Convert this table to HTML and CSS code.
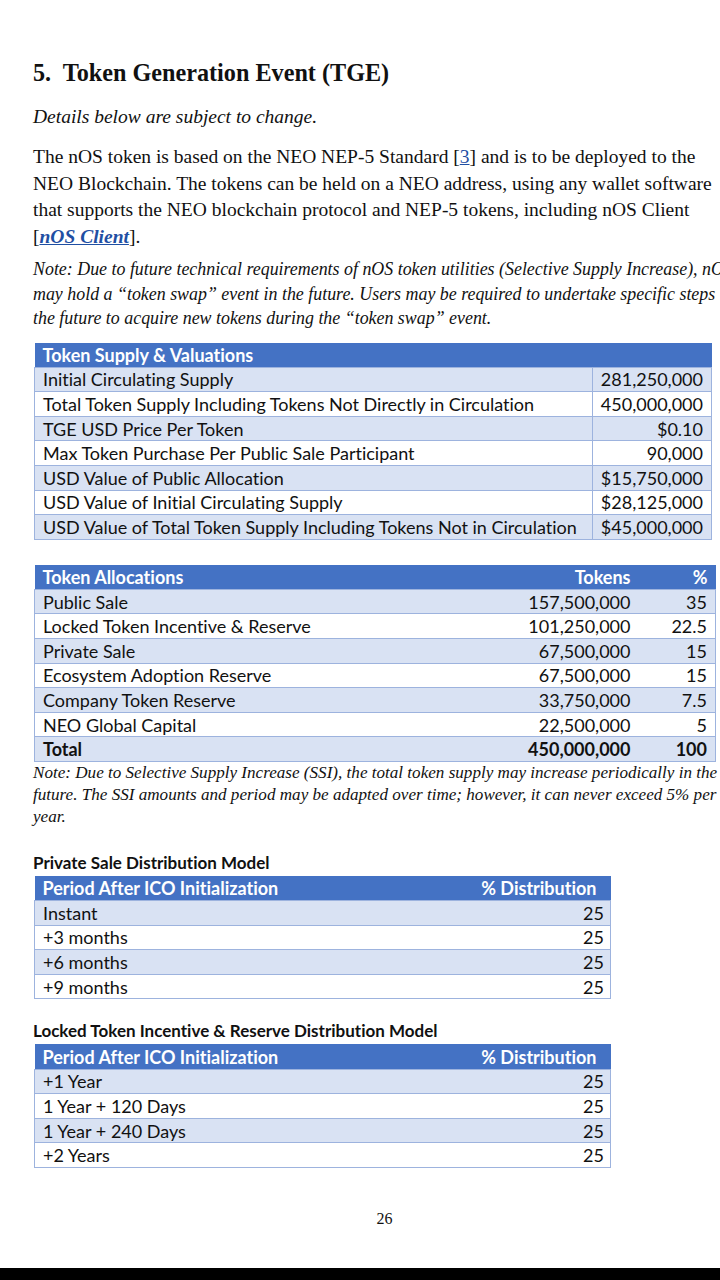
FILE: index.html
```html
<!DOCTYPE html>
<html lang="en">
<head>
<meta charset="utf-8">
<title>Token Generation Event (TGE)</title>
<link rel="stylesheet" href="styles.css">
</head>
<body>
<div class="screen">
  <main class="page">
    <h1 class="title">5.&nbsp; Token Generation Event (TGE)</h1>
    <p class="subtitle">Details below are subject to change.</p>
    <p class="para">
      <span class="line">The nOS token is based on the NEO NEP-5 Standard [<a class="ref" href="#">3</a>] and is to be deployed to the</span>
      <span class="line">NEO Blockchain. The tokens can be held on a NEO address, using any wallet software</span>
      <span class="line">that supports the NEO blockchain protocol and NEP-5 tokens, including nOS Client</span>
      <span class="line">[<a class="ref strong" href="#">nOS Client</a>].</span>
    </p>
    <p class="note">
      <span class="line">Note: Due to future technical requirements of nOS token utilities (Selective Supply Increase), nOS</span>
      <span class="line">may hold a “token swap” event in the future. Users may be required to undertake specific steps in</span>
      <span class="line">the future to acquire new tokens during the “token swap” event.</span>
    </p>

    <table class="tbl tbl-supply">
      <thead>
        <tr><th colspan="2">Token Supply &amp; Valuations</th></tr>
      </thead>
      <tbody>
        <tr><td>Initial Circulating Supply</td><td class="num">281,250,000</td></tr>
        <tr><td>Total Token Supply Including Tokens Not Directly in Circulation</td><td class="num">450,000,000</td></tr>
        <tr><td>TGE USD Price Per Token</td><td class="num">$0.10</td></tr>
        <tr><td>Max Token Purchase Per Public Sale Participant</td><td class="num">90,000</td></tr>
        <tr><td>USD Value of Public Allocation</td><td class="num">$15,750,000</td></tr>
        <tr><td>USD Value of Initial Circulating Supply</td><td class="num">$28,125,000</td></tr>
        <tr><td>USD Value of Total Token Supply Including Tokens Not in Circulation</td><td class="num">$45,000,000</td></tr>
      </tbody>
    </table>

    <table class="tbl tbl-alloc">
      <thead>
        <tr><th>Token Allocations</th><th class="num">Tokens</th><th class="num">%</th></tr>
      </thead>
      <tbody>
        <tr><td>Public Sale</td><td class="num">157,500,000</td><td class="num">35</td></tr>
        <tr><td>Locked Token Incentive &amp; Reserve</td><td class="num">101,250,000</td><td class="num">22.5</td></tr>
        <tr><td>Private Sale</td><td class="num">67,500,000</td><td class="num">15</td></tr>
        <tr><td>Ecosystem Adoption Reserve</td><td class="num">67,500,000</td><td class="num">15</td></tr>
        <tr><td>Company Token Reserve</td><td class="num">33,750,000</td><td class="num">7.5</td></tr>
        <tr><td>NEO Global Capital</td><td class="num">22,500,000</td><td class="num">5</td></tr>
        <tr class="total"><td>Total</td><td class="num">450,000,000</td><td class="num">100</td></tr>
      </tbody>
    </table>
    <p class="note note-ssi">
      <span class="line">Note: Due to Selective Supply Increase (SSI), the total token supply may increase periodically in the</span>
      <span class="line">future. The SSI amounts and period may be adapted over time; however, it can never exceed 5% per</span>
      <span class="line">year.</span>
    </p>

    <h2 class="tbl-title">Private Sale Distribution Model</h2>
    <table class="tbl tbl-dist">
      <thead>
        <tr><th>Period After ICO Initialization</th><th class="num">% Distribution</th></tr>
      </thead>
      <tbody>
        <tr><td>Instant</td><td class="num">25</td></tr>
        <tr><td>+3 months</td><td class="num">25</td></tr>
        <tr><td>+6 months</td><td class="num">25</td></tr>
        <tr><td>+9 months</td><td class="num">25</td></tr>
      </tbody>
    </table>

    <h2 class="tbl-title tbl-title-2">Locked Token Incentive &amp; Reserve Distribution Model</h2>
    <table class="tbl tbl-dist">
      <thead>
        <tr><th>Period After ICO Initialization</th><th class="num">% Distribution</th></tr>
      </thead>
      <tbody>
        <tr><td>+1 Year</td><td class="num">25</td></tr>
        <tr><td>1 Year + 120 Days</td><td class="num">25</td></tr>
        <tr><td>1 Year + 240 Days</td><td class="num">25</td></tr>
        <tr><td>+2 Years</td><td class="num">25</td></tr>
      </tbody>
    </table>

    <div class="page-num">26</div>
  </main>
  <div class="bottom-bar"></div>
</div>
</body>
</html>
```

FILE: styles.css
```css
html, body {
  margin: 0;
  padding: 0;
  background: #ffffff;
}

.screen {
  width: 720px;
  height: 1280px;
  overflow: hidden;
  display: flex;
  flex-direction: column;
  background: #ffffff;
}

.page {
  flex: 1;
  padding: 0 0 0 33px;
  font-family: "Liberation Serif", "Times New Roman", serif;
  color: #111111;
  overflow: hidden;
}

.line {
  display: block;
  white-space: nowrap;
}

.title {
  margin: 59px 0 0;
  font-size: 24.2px;
  font-weight: bold;
  line-height: 28px;
}

.subtitle {
  margin: 19px 0 0;
  font-style: italic;
  font-size: 19.5px;
  line-height: 22px;
}

.para {
  margin: 16px 0 0;
  font-size: 19.5px;
  line-height: 26.5px;
}

.ref {
  color: #1f4fa3;
  text-decoration: underline;
}

.ref.strong {
  font-weight: bold;
  font-style: italic;
}

.note {
  margin: 7px 0 0;
  font-style: italic;
  font-size: 17.9px;
  line-height: 24.5px;
}

.tbl {
  border-collapse: collapse;
  font-family: Lato, "Open Sans", sans-serif;
  font-size: 18px;
  font-variant-ligatures: none;
  color: #111111;
  margin-left: 1px;
}

.tbl th,
.tbl td {
  height: 24.6px;
  padding: 0 8px 0 8px;
  line-height: 22px;
  text-align: left;
  white-space: nowrap;
  vertical-align: middle;
  box-sizing: border-box;
}

.tbl th {
  background: #4472c4;
  color: #ffffff;
  font-weight: bold;
}

.tbl td {
  border-top: 1px solid #9db3de;
}

.tbl tbody tr:nth-child(odd) td {
  background: #d9e2f3;
}

.tbl tbody tr:nth-child(even) td {
  background: #ffffff;
}

.tbl .num {
  text-align: right;
}

.tbl tbody {
  border-left: 1px solid #9db3de;
  border-right: 1px solid #9db3de;
  border-bottom: 1px solid #9db3de;
}

/* Table 1 */
.tbl-supply {
  margin-top: 12px;
  width: 678px;
}

.tbl-supply td:first-child {
  width: 565px;
  border-right: 1px solid #9db3de;
}

/* Table 2 */
.tbl-alloc {
  margin-top: 25px;
  width: 682px;
}

.tbl-alloc td:nth-child(2),
.tbl-alloc th:nth-child(2) {
  width: 140px;
}

.tbl-alloc td:nth-child(3),
.tbl-alloc th:nth-child(3) {
  width: 77px;
}

.tbl-alloc .total td {
  font-weight: bold;
  background: #d9e2f3;
}

.note-ssi {
  margin-top: 0;
  font-size: 17.1px;
  line-height: 22px;
}

/* Distribution tables */
.tbl-title {
  margin: 24px 0 0;
  font-family: Lato, "Open Sans", sans-serif;
  font-size: 17px;
  font-weight: bold;
  font-variant-ligatures: none;
  line-height: 22px;
  color: #111111;
}

.tbl-title-2 {
  margin-top: 21px;
}

.tbl-dist {
  margin-top: 2px;
  width: 577px;
}

.tbl-dist th.num {
  padding-right: 14px;
}

.tbl-dist td.num {
  padding-right: 6px;
}

.page-num {
  margin-top: 41px;
  width: 703px;
  text-align: center;
  font-size: 16px;
  line-height: 20px;
}

.bottom-bar {
  height: 12px;
  background: #000000;
  flex: none;
}
```
